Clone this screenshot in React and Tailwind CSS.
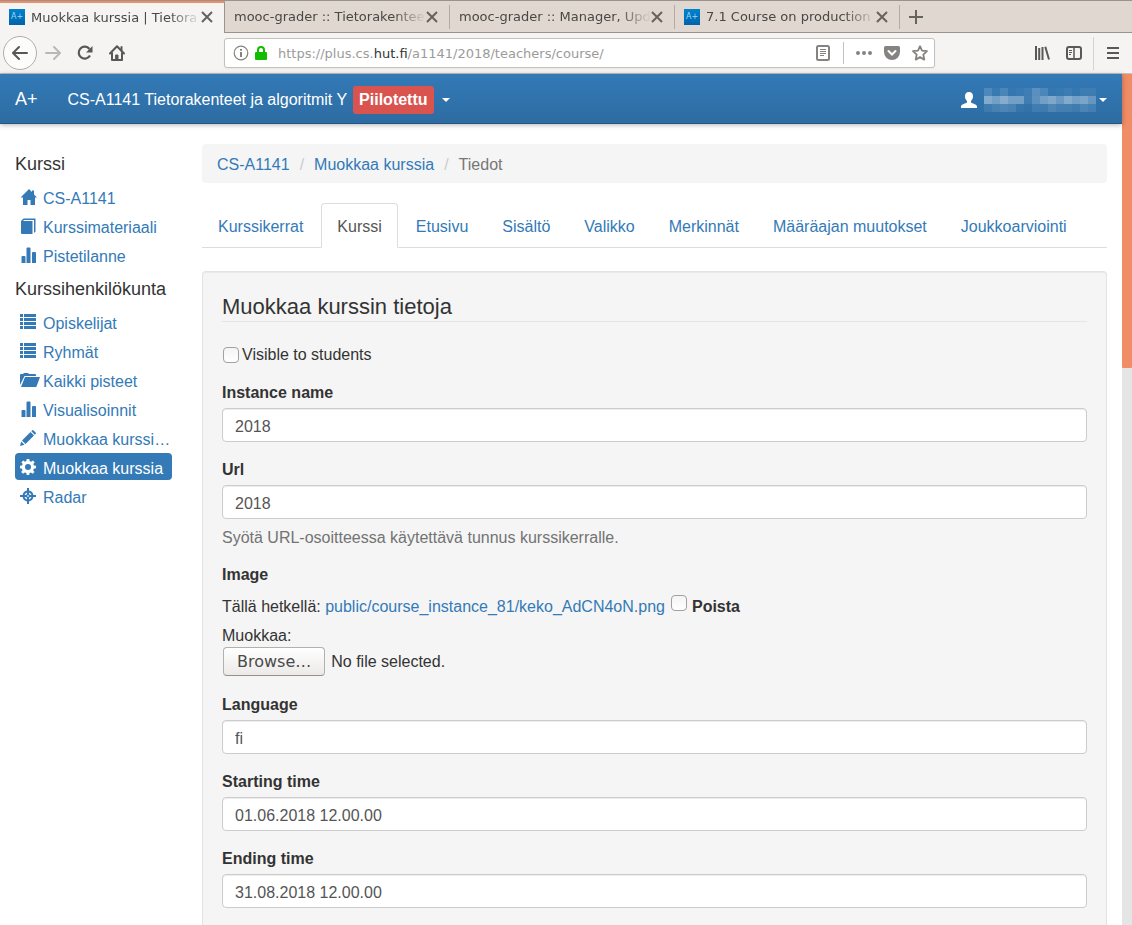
import React, { useRef, useState } from "react";

const browserTabs = [
    { title: "Muokkaa kurssia | Tietora", favicon: true, active: true },
    { title: "mooc-grader :: Tietorakentee" },
    { title: "mooc-grader :: Manager, Upd" },
    { title: "7.1 Course on production", favicon: true },
];

const courseLinks = [
    { label: "CS-A1141", icon: "home" },
    { label: "Kurssimateriaali", icon: "book" },
    { label: "Pistetilanne", icon: "stats" },
];

const staffLinks = [
    { label: "Opiskelijat", icon: "list" },
    { label: "Ryhmät", icon: "list" },
    { label: "Kaikki pisteet", icon: "folder" },
    { label: "Visualisoinnit", icon: "stats" },
    { label: "Muokkaa kurssi…", icon: "pencil" },
    { label: "Muokkaa kurssia", icon: "cog", active: true },
    { label: "Radar", icon: "radar" },
];

const pageTabs = [
    "Kurssikerrat",
    "Kurssi",
    "Etusivu",
    "Sisältö",
    "Valikko",
    "Merkinnät",
    "Määräajan muutokset",
    "Joukkoarviointi",
];

// opacity of each block in the censored user name, row by row
const nameBlocks = [
    [14, 4, 12, 2, 4, 7, 20, 13, 2, 3, 6, 2, 6, 6],
    [40, 32, 42, 32, 32, 8, 22, 32, 38, 28, 40, 32, 36, 26],
    [8, 12, 15, 13, 4, 2, 9, 8, 15, 11, 11, 8, 14, 11],
];

const glyphs = {
    home: <path d="M9 0L.500 8.500H3V16h4.500v-5h3v5H15V8.500h2L14 5.500V1.500h-2V3z" />,
    book: (
        <>
            <path d="M1 3h11.500v13H2q-1 0-1-1z" />
            <path d="M1 3L3.500.500H15.500V13.500L14 15V2H4L3 3z" />
        </>
    ),
    stats: <path d="M1.500 10q0-1 1-1H4.500q1 0 1 1v6h-4zM6.500 1.500q0-1 1-1H9.500q1 0 1 1V16h-4zM12 6q0-1 1-1h2q1 0 1 1v10h-4z" />,
    list: <path d="M0 0h3v3H0zM4 0h12v3H4zM0 4h3v3H0zM4 4h12v3H4zM0 8h3v3H0zM4 8h12v3H4zM0 12h3v3H0zM4 12h12v3H4z" />,
    folder: <path d="M0 13V3q0-1 1-1h2l1-1h4l1 1h6q1 0 1 1v1H4.500zM5 5h15l-3.500 9.500q-.2.500-1 .500H1z" />,
    pencil: <path d="M0 16l1.200-4.500 3.300 3.300zM2 10.500L10.500 2 14 5.500 5.500 14zM11.300 1.200L12.300.2q.5-.4 1 0l2.500 2.500q.4.5 0 1l-1 1z" />,
    cog: (
        <path
            fillRule="evenodd"
            d="M6.700 0h2.600l.4 2.200 1.500.6L13 1.500 14.700 3.300 13.300 5l.6 1.400L16 6.800v2.500l-2.200.4-.6 1.500 1.300 1.800-1.800 1.800-1.800-1.300-1.400.6L9.200 16H6.700l-.4-2-1.500-.6L3 14.700 1.200 12.900l1.300-1.800-.6-1.400L0 9.300V6.800l2-.4L2.700 5 1.400 3.200 3.200 1.400 5 2.700 6.400 2.100zM8 5a3 3 0 1 0 0 6 3 3 0 0 0 0-6z"
        />
    ),
    radar: (
        <path
            fillRule="evenodd"
            d="M7 0h2v2.600A5.500 5.500 0 0 1 13.400 7H16v2h-2.600A5.500 5.500 0 0 1 9 13.400V16H7v-2.600A5.500 5.500 0 0 1 2.600 9H0V7h2.600A5.500 5.500 0 0 1 7 2.600zM7 4.500A4 4 0 0 0 4.500 7H6l1-1zM9 4.500V6l1 1h1.500A4 4 0 0 0 9 4.500zM4.500 9A4 4 0 0 0 7 11.500V10L6 9zM9 10v1.500A4 4 0 0 0 11.500 9H10zM8 7L7 8l1 1 1-1z"
        />
    ),
};

function Glyph({ name }) {
    return (
        <svg viewBox="0 0 16 16" className="h-4 w-4 shrink-0 overflow-visible fill-current" aria-hidden="true">
            {glyphs[name]}
        </svg>
    );
}

function Favicon() {
    return (
        <span className="flex h-4 w-4 shrink-0 items-center justify-center bg-linear-to-b from-[#0083cf] to-[#0062ab] text-[8px] leading-none text-[#9fd8f5]">
            A+
        </span>
    );
}

function BrowserTab({ tab }) {
    return (
        <div
            className={
                tab.active
                    ? "flex w-[225px] items-center border-t-2 border-r border-[#f08c66] border-r-[#9a938c] bg-[#f5f4f2] pr-[11px] pb-0.5 pl-[9px]"
                    : "flex w-[225px] items-center border-b border-[#9a938c] pl-[9px]"
            }
        >
            {tab.favicon && <Favicon />}
            <span
                className={
                    tab.favicon
                        ? "ml-1.5 min-w-0 flex-1 overflow-hidden whitespace-nowrap [mask-image:linear-gradient(to_left,transparent,black_32px)]"
                        : "min-w-0 flex-1 overflow-hidden whitespace-nowrap [mask-image:linear-gradient(to_left,transparent,black_32px)]"
                }
            >
                {tab.title}
            </span>
            <button type="button" aria-label="Close tab" className={tab.active ? "" : "mr-[11px]"}>
                <svg viewBox="0 0 12 12" className="h-3 w-3 stroke-[#66635f] stroke-2" fill="none">
                    <path d="M1 1l10 10M11 1L1 11" />
                </svg>
            </button>
            {!tab.active && <span className="h-6 w-px bg-[#b3aca6]" />}
        </div>
    );
}

function Toolbar() {
    return (
        <div className="flex h-[41px] items-center border-b border-[#c4c2c0] bg-[#f5f4f2] pl-[3px] text-[#5a5855]">
            <button type="button" aria-label="Back" className="flex h-[34px] w-[34px] items-center justify-center rounded-full border border-[#b0aeab] bg-[#fcfcfb]">
                <svg viewBox="0 0 16 16" className="h-4 w-4" fill="none" stroke="currentColor" strokeWidth="2" strokeLinecap="round" strokeLinejoin="round">
                    <path d="M15 8H1.500M7 2L1 8l6 6" />
                </svg>
            </button>
            <button type="button" aria-label="Forward" className="ml-2 text-[#bab8b6]">
                <svg viewBox="0 0 16 16" className="h-4 w-4" fill="none" stroke="currentColor" strokeWidth="2" strokeLinecap="round" strokeLinejoin="round">
                    <path d="M1 8h13.500M9 2l6 6-6 6" />
                </svg>
            </button>
            <button type="button" aria-label="Reload" className="ml-4">
                <svg viewBox="0 0 16 16" className="h-4 w-4" fill="none" stroke="currentColor" strokeWidth="2.200">
                    <path d="M13 10.500A6 6 0 1 1 12.500 4" />
                    <path d="M15.500 1v6.500H9z" fill="currentColor" stroke="none" />
                </svg>
            </button>
            <button type="button" aria-label="Home" className="ml-4">
                <svg viewBox="0 0 16 16" className="h-4 w-4" fill="none" stroke="currentColor" strokeWidth="2" strokeLinejoin="round" strokeLinecap="round">
                    <path d="M1 8.500L8 1.200l7 7.300M3 8v7h10V8" />
                    <path d="M7 10h2v5H7z" strokeWidth="1" fill="currentColor" />
                    <path d="M12.500 5V2" />
                </svg>
            </button>
            <div className="ml-[99px] flex h-[30px] w-[711px] shrink items-center rounded-[3px] border border-[#c4c0bb] bg-white pl-2 shadow-xs">
                <svg viewBox="0 0 16 16" className="h-4 w-4 shrink-0" fill="none" stroke="#85837f" strokeWidth="1.200">
                    <circle cx="8" cy="8" r="6.800" />
                    <path d="M8 7v5M8 4v1.800" strokeWidth="2" />
                </svg>
                <svg viewBox="0 0 12 14" className="ml-1.5 h-3.5 w-3 shrink-0">
                    <path d="M3 7V4a3 3 0 0 1 6 0v3" fill="none" stroke="#12bc00" strokeWidth="2" />
                    <rect y="6" width="12" height="8" rx="1" fill="#12bc00" />
                </svg>
                <p className="ml-[11px] flex-1 truncate text-[#9b9b9b]">
                    https://plus.cs.<span className="text-[#2e3436]">hut.fi</span>/a1141/2018/teachers/course/
                </p>
                <svg viewBox="0 0 14 16" className="h-4 w-3.5 shrink-0" fill="none" stroke="#85837f">
                    <rect x="1" y="1" width="12" height="14" rx="1.500" strokeWidth="2" />
                    <path d="M4 4.500h6M4 6.500h6M4 8.500h6M4 10.500h4" />
                </svg>
                <span className="mr-3 ml-[13px] h-[22px] w-px bg-[#c4c2c0]" />
                <svg viewBox="0 0 16 4" className="h-1 w-4 shrink-0 fill-[#85837f]">
                    <circle cx="2" cy="2" r="2" />
                    <circle cx="8" cy="2" r="2" />
                    <circle cx="14" cy="2" r="2" />
                </svg>
                <svg viewBox="0 0 16 14" className="ml-3 h-3.5 w-4 shrink-0">
                    <path d="M1.500 0h13Q16 0 16 1.500V6a8 8 0 0 1-16 0V1.500Q0 0 1.500 0z" fill="#85837f" />
                    <path d="M4.500 5L8 8.500 11.500 5" fill="none" stroke="#fff" strokeWidth="2" strokeLinecap="round" />
                </svg>
                <svg viewBox="0 0 16 16" className="mr-1.5 ml-3 h-4 w-4 shrink-0" fill="none" stroke="#85837f" strokeWidth="1.800" strokeLinejoin="round">
                    <path d="M8 1.200l2 4.500 5 .5-3.700 3.400 1 5L8 12.100l-4.300 2.500 1-5L1 6.200l5-.5z" />
                </svg>
            </div>
            <div className="ml-auto flex items-center">
                <svg viewBox="0 0 16 14" className="h-3.5 w-4" fill="none" stroke="currentColor" strokeWidth="2">
                    <path d="M2 0v14M8.500 1v13M11.300.8L15 13.500" />
                    <path d="M5.200 2v12" />
                </svg>
                <svg viewBox="0 0 16 14" className="ml-4 h-3.5 w-4" fill="none" stroke="currentColor">
                    <rect x="1" y="1" width="14" height="12" rx="2" strokeWidth="2" />
                    <path d="M8 1v12" strokeWidth="1.500" />
                    <path d="M3 4.500h3M3 6.500h3M3 8.500h2" />
                </svg>
                <span className="mr-[13px] ml-[11px] h-[33px] w-px bg-[#d5d3d1]" />
                <button type="button" aria-label="Menu" className="mr-[13px]">
                    <svg viewBox="0 0 12 12" className="h-3 w-3" stroke="currentColor" strokeWidth="2">
                        <path d="M0 1h12M0 6h12M0 11h12" />
                    </svg>
                </button>
            </div>
        </div>
    );
}

function Caret() {
    return <span className="border-x-4 border-t-4 border-x-transparent border-t-white" />;
}

function Navbar() {
    return (
        <nav className="z-10 flex h-[50px] shrink-0 items-center border-b border-[#245580] bg-linear-to-b from-[#337ab7] to-[#2d6ca2] px-[15px] pt-0.5 text-white shadow-[0_1px_5px_rgba(0,0,0,0.3)]">
            <a href="#" className="text-[18px]">A+</a>
            <a href="#" className="ml-[30px] flex items-center">
                CS-A1141 Tietorakenteet ja algoritmit Y
                <span className="mr-2 ml-1.5 rounded-[3px] bg-[#d9534f] px-1.5 py-0.5 leading-6 font-bold">Piilotettu</span>
                <Caret />
            </a>
            <a href="#" aria-label="User menu" className="ml-auto flex items-center">
                <svg viewBox="0 0 16 16" className="mr-[7px] h-4 w-4 fill-white">
                    <path d="M8 0c2.800 0 4 1.800 4 4.300 0 2-.8 3.700-2 4.700v1.500c1 .8 6 1.700 6 4V16H0v-1.500c0-2.300 5-3.200 6-4V9C4.800 8 4 6.300 4 4.300 4 1.800 5.200 0 8 0z" />
                </svg>
                <svg viewBox="0 0 112 24" className="mr-[3px] h-6 w-28 fill-white" shapeRendering="crispEdges">
                    {nameBlocks.map((row, y) =>
                        row.map((alpha, x) => (
                            <rect key={`${x}-${y}`} x={x * 8} y={y * 8} width="8" height="8" fillOpacity={alpha / 100} />
                        ))
                    )}
                </svg>
                <Caret />
            </a>
        </nav>
    );
}

function SideMenu({ title, links }) {
    return (
        <>
            <h4 className="mt-2 mb-[9px] text-[18px] leading-5">{title}</h4>
            <ul className="mb-[11px] flex flex-col gap-0.5">
                {links.map((link) => (
                    <li key={link.label}>
                        <a
                            href="#"
                            className={
                                link.active
                                    ? "flex h-[27px] items-center gap-[7px] rounded bg-[#337ab7] pl-[5px] whitespace-nowrap text-white"
                                    : "flex h-[27px] items-center gap-[7px] rounded pl-[5px] whitespace-nowrap text-[#337ab7]"
                            }
                        >
                            <Glyph name={link.icon} />
                            <span className="pt-[3px]">{link.label}</span>
                        </a>
                    </li>
                ))}
            </ul>
        </>
    );
}

function TextField({ id, label, initial, help }) {
    const [value, setValue] = useState(initial);

    return (
        <div className="mb-[15px]">
            <label htmlFor={id} className="mb-1 block pt-px font-bold">{label}</label>
            <input
                id={id}
                type="text"
                value={value}
                onChange={(e) => setValue(e.target.value)}
                className="block h-[34px] w-full rounded border border-[#ccc] bg-white px-3 pt-1 text-[#555] shadow-[inset_0_1px_1px_rgba(0,0,0,0.075)]"
            />
            {help && <p className="mt-[7px] -mb-0.5 text-[#737373]">{help}</p>}
        </div>
    );
}

function CheckBox({ id, className }) {
    return (
        <input
            id={id}
            type="checkbox"
            className={`h-4 w-4 shrink-0 appearance-none rounded border border-[#a3a19f] bg-linear-to-b from-[#f4f4f4] to-white checked:bg-[#337ab7] ${className}`}
        />
    );
}

function ImageField() {
    const fileRef = useRef(null);
    const [fileName, setFileName] = useState("");

    return (
        <div className="mb-4">
            <label htmlFor="image" className="mb-2 block pt-px font-bold">Image</label>
            <div className="mb-1.5 flex pt-px">
                <span>
                    Tällä hetkellä:{" "}
                    <a href="#" className="text-[#337ab7]">public/course_instance_81/keko_AdCN4oN.png</a>
                </span>
                <CheckBox id="image-clear" className="mr-[5px] ml-1.5" />
                <label htmlFor="image-clear" className="font-bold">Poista</label>
            </div>
            <p>Muokkaa:</p>
            <div className="flex items-center gap-1.5">
                <input
                    id="image"
                    type="file"
                    ref={fileRef}
                    onChange={(e) => setFileName(e.target.files[0]?.name || "")}
                    className="hidden"
                />
                <button
                    type="button"
                    onClick={() => fileRef.current.click()}
                    className="ml-px h-[29px] rounded border border-[#b3b0ad] border-b-[#93908d] bg-linear-to-b from-white to-[#ebeae8] px-[13px] font-['DejaVu_Sans',sans-serif] text-[#4a4a4a]"
                >
                    Browse…
                </button>
                <span>{fileName || "No file selected."}</span>
            </div>
        </div>
    );
}

export default function App() {
    return (
        <div className="flex h-screen flex-col overflow-hidden bg-white font-['Liberation_Sans',Arial,sans-serif] text-[16px] leading-[23px] text-[#333]">
            <header className="shrink-0 font-['DejaVu_Sans',sans-serif] text-[13px] text-[#4a4744]">
                <div className="flex h-[33px] border-t border-[#9a938c] bg-[#dfd7d0]">
                    {browserTabs.map((tab) => (
                        <BrowserTab key={tab.title} tab={tab} />
                    ))}
                    <div className="flex flex-1 items-center border-b border-[#9a938c] pl-[9px]">
                        <button type="button" aria-label="New tab">
                            <svg viewBox="0 0 14 14" className="h-3.5 w-3.5 stroke-[#66635f] stroke-2">
                                <path d="M7 0v14M0 7h14" />
                            </svg>
                        </button>
                    </div>
                </div>
                <Toolbar />
            </header>

            <div className="flex min-h-0 flex-1">
                <div className="flex min-w-0 flex-1 flex-col">
                    <Navbar />
                    <div className="flex min-h-0 flex-1 pt-5">
                        <aside className="w-1/6 px-[15px] pt-0.5">
                            <SideMenu title="Kurssi" links={courseLinks} />
                            <SideMenu title="Kurssihenkilökunta" links={staffLinks} />
                        </aside>

                        <main className="flex w-5/6 flex-col px-[15px]">
                            <ol className="mb-5 flex rounded bg-[#f5f5f5] px-[15px] pt-[9px] pb-[7px]">
                                <li><a href="#" className="text-[#337ab7]">CS-A1141</a></li>
                                <li className="px-2.5 text-[#ccc]">/</li>
                                <li><a href="#" className="text-[#337ab7]">Muokkaa kurssia</a></li>
                                <li className="px-2.5 text-[#ccc]">/</li>
                                <li className="text-[#777]">Tiedot</li>
                            </ol>

                            <ul className="mb-[23px] flex gap-0.5 border-b border-[#ddd]">
                                {pageTabs.map((tab) => (
                                    <li key={tab} className="-mb-px">
                                        <a
                                            href="#"
                                            className={
                                                tab === "Kurssi"
                                                    ? "block rounded-t border border-[#ddd] border-b-white bg-white px-[15px] pt-[11px] pb-[9px] whitespace-nowrap text-[#555]"
                                                    : "block border border-transparent px-[15px] pt-[11px] pb-[9px] whitespace-nowrap text-[#337ab7]"
                                            }
                                        >
                                            {tab}
                                        </a>
                                    </li>
                                ))}
                            </ul>

                            <form className="min-h-0 flex-1 rounded-t border border-b-0 border-[#e3e3e3] bg-[#f5f5f5] p-[19px] shadow-[inset_0_1px_1px_rgba(0,0,0,0.05)]">
                                <h2 className="mb-[21px] border-b border-[#e5e5e5] pt-0.5 text-[22px] leading-7">Muokkaa kurssin tietoja</h2>
                                <div className="mb-3.5 flex items-center">
                                    <CheckBox id="visible" className="mr-[3px] ml-px" />
                                    <label htmlFor="visible">Visible to students</label>
                                </div>
                                <TextField id="instance-name" label="Instance name" initial="2018" />
                                <TextField id="url" label="Url" initial="2018" help="Syötä URL-osoitteessa käytettävä tunnus kurssikerralle." />
                                <ImageField />
                                <TextField id="language" label="Language" initial="fi" />
                                <TextField id="starting-time" label="Starting time" initial="01.06.2018 12.00.00" />
                                <TextField id="ending-time" label="Ending time" initial="31.08.2018 12.00.00" />
                            </form>
                        </main>
                    </div>
                </div>

                <div className="w-2.5 bg-[#e5e5e5]">
                    <div className="h-[34.5%] rounded-b-[1px] bg-[#f08c66]" />
                </div>
            </div>
        </div>
    );
}
